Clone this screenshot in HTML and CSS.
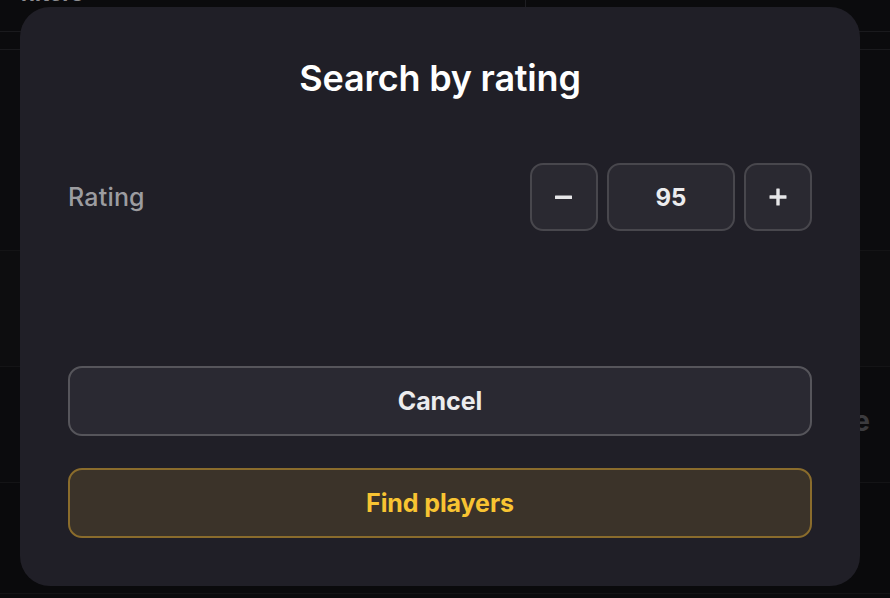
FILE: index.html
```html
<!DOCTYPE html>
<html>
<head>
<meta charset="utf-8">
<link rel="stylesheet" href="styles.css">
</head>
<body>
<div class="page">
  <div class="bg-header">
    <div class="bg-title">filters</div>
    <div class="bg-divider"></div>
  </div>
  <div class="bg-row r1"></div>
  <div class="bg-row r2"></div>
  <div class="bg-row r3"></div>
  <div class="bg-row r4"><span class="bg-e">e</span></div>
  <div class="bg-row r5"></div>

  <div class="modal">
    <h1 class="modal-title">Search by rating</h1>
    <div class="field">
      <span class="field-label">Rating</span>
      <div class="stepper">
        <button class="step-btn" aria-label="decrease">
          <svg width="18" height="18" viewBox="0 0 18 18"><rect x="0" y="7.5" width="17" height="3.4" rx="0.5" fill="#e6e6e8"/></svg>
        </button>
        <div class="step-value">95</div>
        <button class="step-btn" aria-label="increase">
          <svg width="18" height="18" viewBox="0 0 18 18"><rect x="0.5" y="7.3" width="17" height="3.4" rx="0.5" fill="#e6e6e8"/><rect x="7.3" y="0.5" width="3.4" height="17" rx="0.5" fill="#e6e6e8"/></svg>
        </button>
      </div>
    </div>
    <div class="actions">
      <button class="btn btn-cancel">Cancel</button>
      <button class="btn btn-find">Find players</button>
    </div>
  </div>
</div>
</body>
</html>
```
FILE: styles.css
```css
html, body {
  margin: 0;
  padding: 0;
}
body {
  background: #0b0b0d;
  font-family: Inter, "Noto Sans", sans-serif;
  width: 890px;
  height: 598px;
  overflow: hidden;
}
.page {
  position: relative;
  width: 890px;
  height: 598px;
}
.bg-header {
  height: 31px;
  display: flex;
  border-bottom: 1px solid #1a1a1d;
  position: relative;
}
.bg-title {
  color: #8e8e92;
  font-size: 22px;
  font-weight: 700;
  padding-left: 20px;
  margin-top: -20px;
  width: 505px;
}
.bg-divider {
  width: 1px;
  background: #1e1e22;
}
.bg-row {
  border-bottom: 1px solid #141416;
}
.r1 { height: 17px; border-bottom-color: #1a1a1d; }
.r2 { height: 200px; background: #0c0c0e; }
.r3 { height: 115px; background: #0d0d0f; }
.r4 {
  height: 115px;
  background: #0b0b0d;
  display: flex;
  justify-content: flex-end;
  align-items: center;
}
.r5 { height: 110px; background: #0a0a0c; }
.bg-e {
  color: #3b3b3e;
  font-size: 28px;
  font-weight: 700;
  margin-right: 20px;
  margin-top: -8px;
}
.modal {
  position: absolute;
  left: 20px;
  top: 7px;
  width: 840px;
  height: 579px;
  box-sizing: border-box;
  background: #201f27;
  border-radius: 30px;
  padding: 0 48px 0 48px;
  display: flex;
  flex-direction: column;
}
.modal-title {
  margin: 50px 0 0;
  text-align: center;
  color: #ffffff;
  font-size: 36px;
  font-weight: 600;
  letter-spacing: -0.2px;
  line-height: 42px;
}
.field {
  margin-top: 64px;
  display: flex;
  justify-content: space-between;
  align-items: center;
}
.field-label {
  color: #9c9ca0;
  font-size: 25px;
  font-weight: 500;
  letter-spacing: 0.2px;
}
.stepper {
  display: flex;
  gap: 9px;
}
.step-btn, .step-value {
  box-sizing: border-box;
  height: 68px;
  border: 2px solid #48474d;
  background: #2a2931;
  border-radius: 13px;
  display: flex;
  align-items: center;
  justify-content: center;
  padding: 0;
}
.step-btn {
  width: 68px;
}
.step-value {
  width: 128px;
  color: #ececee;
  font-size: 24px;
  font-weight: 700;
}
.actions {
  margin-top: 135px;
  display: flex;
  flex-direction: column;
  gap: 32px;
}
.btn {
  height: 70px;
  box-sizing: border-box;
  border-radius: 14px;
  font-family: Inter, "Noto Sans", sans-serif;
  font-size: 25px;
  font-weight: 700;
  letter-spacing: -0.1px;
}
.btn-cancel {
  background: #2a2932;
  border: 2px solid #56555b;
  color: #ececee;
}
.btn-find {
  background: #3b3329;
  border: 2px solid #8a6c2c;
  color: #f8c432;
}
```
